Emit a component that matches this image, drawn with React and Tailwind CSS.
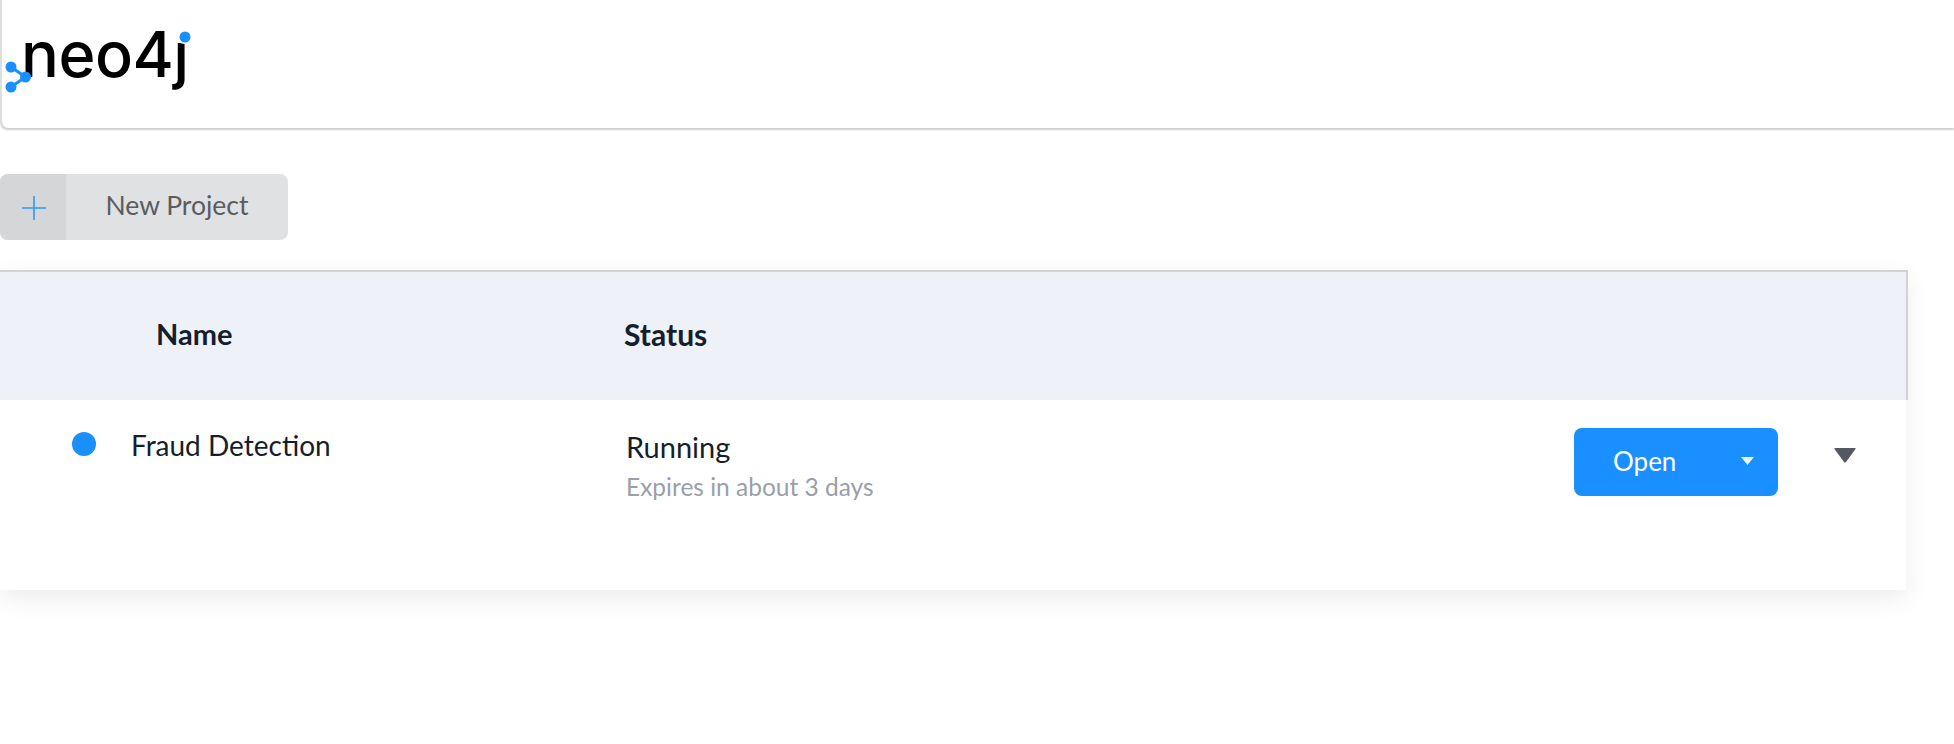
import React from "react";

function Logo() {
  return (
    <div className="relative w-[200px] h-[100px]">
      <span className="absolute left-[19px] top-[14px] text-[63px] leading-[80px] font-medium tracking-[-0.5px] text-black font-['Inter',sans-serif]">neo4j</span>
      <svg className="absolute -left-[2px] top-0" width="200" height="100" viewBox="0 0 200 100">
        <circle cx="185" cy="33" r="11" fill="#fff" />
        <circle cx="185" cy="37" r="5.5" fill="#1a8fff" />
        <path d="M11 67 L25.5 77 L11 87" stroke="#1a8fff" strokeWidth="3" fill="none" />
        <circle cx="11" cy="67" r="5.5" fill="#1a8fff" />
        <circle cx="25.5" cy="77" r="5.5" fill="#1a8fff" />
        <circle cx="11" cy="87" r="5.5" fill="#1a8fff" />
      </svg>
    </div>
  );
}

export default function App() {
  return (
    <div className="min-h-[744px] bg-white font-['Lato','Noto_Sans',sans-serif] text-[#151e2b]">
      <header className="h-[128px] bg-white border-l-2 border-[#dedede] rounded-bl-lg shadow-[0_2px_2px_rgba(0,0,0,0.2)]">
        <Logo />
      </header>

      <div className="mt-[46px] flex">
        <button className="flex h-[66px] w-[288px] rounded-lg overflow-hidden bg-[#e0e1e3]">
          <span className="flex w-[66px] h-full items-center justify-center pl-[2px] pt-[2px] bg-[#d5d6d8]">
            <svg width="24" height="24" viewBox="0 0 24 24" stroke="#2f96fb" strokeWidth="1.6">
              <path d="M12 0V24M0 12H24" />
            </svg>
          </span>
          <span className="flex-1 h-full flex items-center justify-center pb-[2px] text-[26.5px] text-[#5a5c5e]">New Project</span>
        </button>
      </div>

      <section className="mt-[30px] w-[1906px] bg-white shadow-[0_8px_24px_rgba(0,0,0,0.08)]">
        <div className="h-[130px] w-[1908px] pb-[4px] flex items-center bg-[#eef1f8] border-t-2 border-r-2 border-[#d3d3d3] font-bold">
          <div className="w-[624px] pl-[156px] text-[29px]">Name</div>
          <div className="text-[30px]">Status</div>
        </div>
        <div className="h-[190px] flex items-start bg-white">
          <div className="w-[626px] flex items-start pl-[72px] pt-[29px]">
            <span className="mt-[3px] w-[24px] h-[24px] rounded-full bg-[#1a8fff]" />
            <span className="ml-[35px] text-[28px] leading-[32px]">Fraud Detection</span>
          </div>
          <div className="w-[948px] pt-[29px]">
            <div className="text-[29px] leading-[36px]">Running</div>
            <div className="mt-[6px] text-[24.5px] leading-[32px] text-[#9a9fa8]">Expires in about 3 days</div>
          </div>
          <button className="mt-[28px] flex items-center h-[68px] w-[204px] rounded-lg bg-[#1a8fff] text-white text-[26px]">
            <span className="pl-[39px] pb-[2px] w-[167px] text-left">Open</span>
            <svg width="13" height="8" viewBox="0 0 13 8" fill="#e8f3ff" className="-mt-[2px]"><path d="M0 0H13L6.5 8Z" /></svg>
          </button>
          <svg width="22" height="15" viewBox="0 0 22 15" fill="#545863" className="ml-[56px] mt-[48px]"><path d="M1 0H21Q22 0 21.5 1L12 14Q11 15 10 14L.5 1Q0 0 1 0Z" /></svg>
        </div>
      </section>
    </div>
  );
}
